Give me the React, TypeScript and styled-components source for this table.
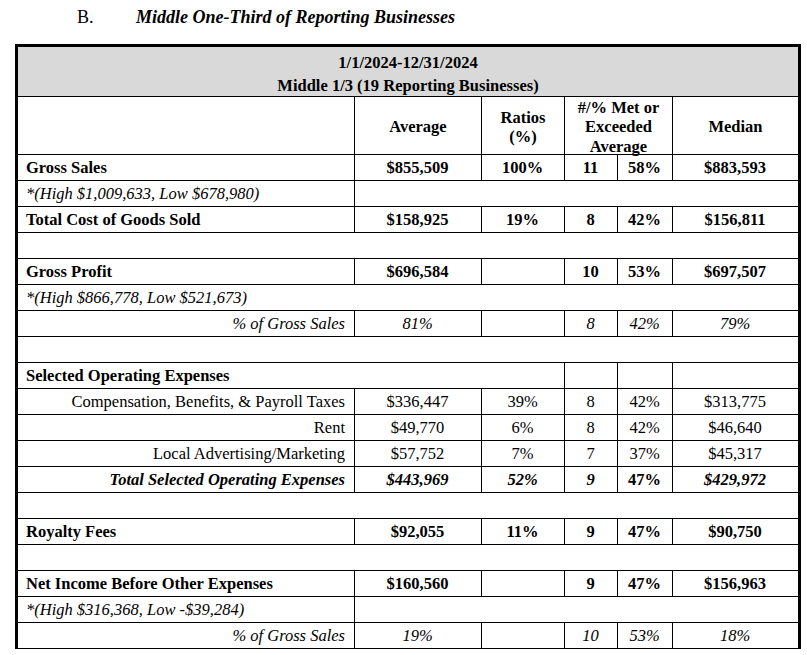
import React from "react";
import styled, { createGlobalStyle } from "styled-components";

const GlobalStyle = createGlobalStyle`
  html, body { margin: 0; padding: 0; background: #ffffff; }
  body { font-family: "Liberation Serif", "Times New Roman", serif; color: #000; }
`;

const Page = styled.div`
  padding: 6px 0 0 15px;
`;

const TitleBar = styled.div`
  display: flex;
  align-items: baseline;
  height: 22px;
  line-height: 22px;
  font-size: 18px;
  padding-left: 62px;
  margin-bottom: 16px;
`;

const SectionLetter = styled.span`
  width: 59px;
`;

const SectionTitle = styled.span`
  font-weight: bold;
  font-style: italic;
`;

const Table = styled.div`
  display: grid;
  width: max-content;
  grid-template-columns: 337px 127px 83px 53px 55px 125px;
  grid-template-rows: 50px 58px;
  grid-auto-rows: 26px;
  border-top: 3px solid #000;
  border-left: 3px solid #000;
  border-right: 3px solid #000;
  font-size: 16.5px;
`;

const Banner = styled.div`
  grid-column: 1 / -1;
  background: #d9d9d9;
  border-bottom: 1px solid #000;
  display: flex;
  flex-direction: column;
  justify-content: center;
  align-items: center;
  font-weight: bold;
  line-height: 23px;
  padding-top: 4px;
  box-sizing: border-box;
`;

const HeadCell = styled.div<{ $span?: number; $last?: boolean; $lh?: string }>`
  grid-column: span ${(p) => p.$span ?? 1};
  box-sizing: border-box;
  border-bottom: 1px solid #000;
  border-right: ${(p) => (p.$last ? "none" : "1px solid #000")};
  display: flex;
  flex-direction: column;
  justify-content: center;
  align-items: center;
  text-align: center;
  font-weight: bold;
  line-height: ${(p) => p.$lh ?? "20px"};
  padding-top: 3px;
  overflow: visible;
`;

type Align = "left" | "center" | "right";

const Cell = styled.div<{
  $span?: number;
  $last?: boolean;
  $align?: Align;
  $bold?: boolean;
  $italic?: boolean;
}>`
  grid-column: span ${(p) => p.$span ?? 1};
  box-sizing: border-box;
  border-bottom: 1px solid #000;
  border-right: ${(p) => (p.$last ? "none" : "1px solid #000")};
  display: flex;
  align-items: center;
  justify-content: ${(p) =>
    p.$align === "left" ? "flex-start" : p.$align === "right" ? "flex-end" : "center"};
  padding: 1px 9px 0 8px;
  white-space: nowrap;
  font-weight: ${(p) => (p.$bold ? "bold" : "normal")};
  font-style: ${(p) => (p.$italic ? "italic" : "normal")};
`;

type Val = { t: string; b?: boolean; i?: boolean };

type Row =
  | { kind: "data"; label: string; la: Align; lb?: boolean; li?: boolean; vals: Val[] }
  | { kind: "note"; label: string; full?: boolean }
  | { kind: "blank" }
  | { kind: "section"; label: string };

const B = (t: string): Val => ({ t, b: true });
const N = (t: string): Val => ({ t });
const I = (t: string): Val => ({ t, i: true });
const BI = (t: string): Val => ({ t, b: true, i: true });

const rows: Row[] = [
  { kind: "data", label: "Gross Sales", la: "left", lb: true, vals: [B("$855,509"), B("100%"), B("11"), B("58%"), B("$883,593")] },
  { kind: "note", label: "*(High $1,009,633, Low $678,980)" },
  { kind: "data", label: "Total Cost of Goods Sold", la: "left", lb: true, vals: [B("$158,925"), B("19%"), B("8"), B("42%"), B("$156,811")] },
  { kind: "blank" },
  { kind: "data", label: "Gross Profit", la: "left", lb: true, vals: [B("$696,584"), N(""), B("10"), B("53%"), B("$697,507")] },
  { kind: "note", label: "*(High $866,778, Low $521,673)", full: true },
  { kind: "data", label: "% of Gross Sales", la: "right", li: true, vals: [I("81%"), N(""), I("8"), I("42%"), I("79%")] },
  { kind: "blank" },
  { kind: "section", label: "Selected Operating Expenses" },
  { kind: "data", label: "Compensation, Benefits, & Payroll Taxes", la: "right", vals: [N("$336,447"), N("39%"), N("8"), N("42%"), N("$313,775")] },
  { kind: "data", label: "Rent", la: "right", vals: [N("$49,770"), N("6%"), N("8"), N("42%"), N("$46,640")] },
  { kind: "data", label: "Local Advertising/Marketing", la: "right", vals: [N("$57,752"), N("7%"), N("7"), N("37%"), N("$45,317")] },
  { kind: "data", label: "Total Selected Operating Expenses", la: "right", lb: true, li: true, vals: [BI("$443,969"), BI("52%"), BI("9"), B("47%"), BI("$429,972")] },
  { kind: "blank" },
  { kind: "data", label: "Royalty Fees", la: "left", lb: true, vals: [B("$92,055"), B("11%"), B("9"), B("47%"), B("$90,750")] },
  { kind: "blank" },
  { kind: "data", label: "Net Income Before Other Expenses", la: "left", lb: true, vals: [B("$160,560"), N(""), B("9"), B("47%"), B("$156,963")] },
  { kind: "note", label: "*(High $316,368, Low -$39,284)" },
  { kind: "data", label: "% of Gross Sales", la: "right", li: true, vals: [I("19%"), N(""), I("10"), I("53%"), I("18%")] },
];

function renderRow(r: Row, k: number) {
  switch (r.kind) {
    case "blank":
      return <Cell key={k} $span={6} $last />;
    case "note":
      return r.full ? (
        <Cell key={k} $span={6} $last $align="left" $italic>
          {r.label}
        </Cell>
      ) : (
        <React.Fragment key={k}>
          <Cell $align="left" $italic>
            {r.label}
          </Cell>
          <Cell $span={5} $last />
        </React.Fragment>
      );
    case "section":
      return (
        <React.Fragment key={k}>
          <Cell $span={3} $align="left" $bold>
            {r.label}
          </Cell>
          <Cell />
          <Cell />
          <Cell $last />
        </React.Fragment>
      );
    case "data":
      return (
        <React.Fragment key={k}>
          <Cell $align={r.la} $bold={r.lb} $italic={r.li}>
            {r.label}
          </Cell>
          {r.vals.map((v, j) => (
            <Cell key={j} $bold={v.b} $italic={v.i} $last={j === r.vals.length - 1}>
              {v.t}
            </Cell>
          ))}
        </React.Fragment>
      );
  }
}

export default function App() {
  return (
    <>
      <GlobalStyle />
      <Page>
        <TitleBar>
          <SectionLetter>B.</SectionLetter>
          <SectionTitle>Middle One-Third of Reporting Businesses</SectionTitle>
        </TitleBar>
        <Table>
          <Banner>
            <div>1/1/2024-12/31/2024</div>
            <div>Middle 1/3 (19 Reporting Businesses)</div>
          </Banner>
          <HeadCell />
          <HeadCell>Average</HeadCell>
          <HeadCell $lh="19.5px">
            <div>Ratios</div>
            <div>(%)</div>
          </HeadCell>
          <HeadCell $span={2} $lh="19.5px">
            <div>#/% Met or</div>
            <div>Exceeded</div>
            <div>Average</div>
          </HeadCell>
          <HeadCell $last>Median</HeadCell>
          {rows.map(renderRow)}
        </Table>
      </Page>
    </>
  );
}
